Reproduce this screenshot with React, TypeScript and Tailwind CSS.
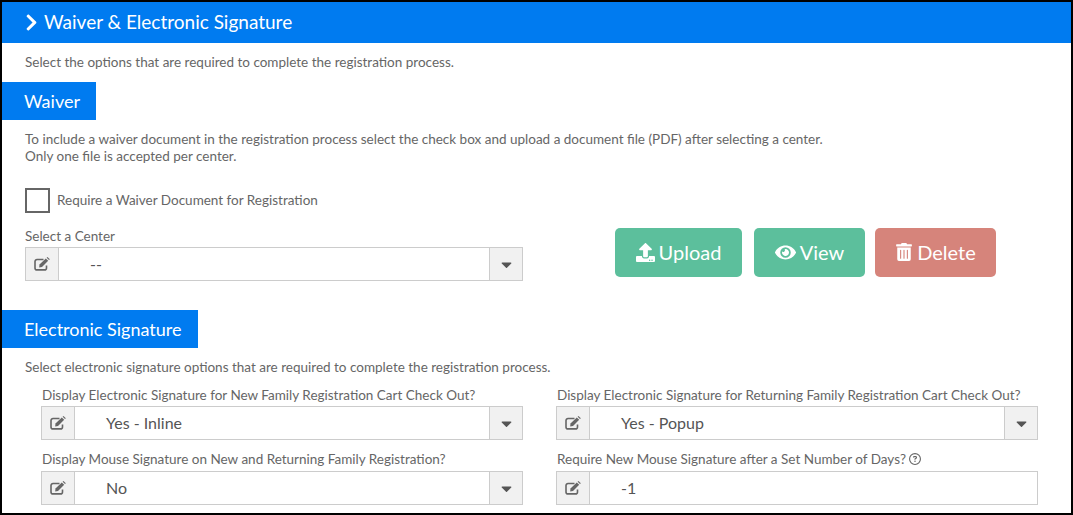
// Waiver and electronic signature section of the registration settings page.
import type { ReactNode } from "react";
import { FaCaretDown, FaChevronRight, FaEye, FaTrashAlt, FaUpload } from "react-icons/fa";
import { FaRegCircleQuestion } from "react-icons/fa6";

function EditIcon() {
  return (
    <svg viewBox="0 0 16 14" className="h-[14px] w-[16px]">
      <path d="M12.5 8.5v2.4A2 2 0 0 1 10.500 12.900H3A2 2 0 0 1 1 10.900V4.500A2 2 0 0 1 3 2.500H9.500" fill="none" stroke="currentColor" strokeWidth="1.6" />
      <path d="M5.500 7.400 11.800 1.400 14.200 3.800 8 10 5.200 10.500Z" fill="currentColor" />
      <path d="M12.600 .8 13.500 0 15.800 2.200 15 3.100Z" fill="currentColor" />
    </svg>
  );
}

function SectionTag({ children, className }: { children: ReactNode; className: string }) {
  return (
    <div className={`flex h-[38px] items-center bg-[#007bf0] pl-[22px] text-[18px] text-white ${className}`}>
      {children}
    </div>
  );
}

function Field({ value, select = true }: { value: string; select?: boolean }) {
  return (
    <div className="flex h-[34px] border border-[#cccccc] text-[#555555]">
      <div className="flex w-[33px] shrink-0 items-center justify-center border-r border-[#cccccc] bg-[#f1f1f1] text-[#666666]">
        <EditIcon />
      </div>
      <div className="flex-1 pl-[31px] text-[16px] leading-[32px]">{value}</div>
      {select && (
        <div className="flex w-[33px] shrink-0 items-center justify-center border-l border-[#cccccc] bg-[#f1f1f1] text-[17px] text-[#555555]">
          <FaCaretDown />
        </div>
      )}
    </div>
  );
}

function ActionButton({ icon, label, className }: { icon: ReactNode; label: string; className: string }) {
  return (
    <button className={`flex h-[49px] items-center justify-center gap-[4px] rounded-[5px] pb-[1px] text-[20px] text-white ${className}`}>
      {icon}
      {label}
    </button>
  );
}

export default function App() {
  return (
    <div className="h-[515px] w-[1073px] overflow-hidden border-2 border-black bg-white font-['Lato','Noto_Sans',sans-serif] text-[13.5px] text-[#666666]">
      <div className="flex h-[41px] items-center gap-[3px] bg-[#007bf0] pl-[20px] text-[19px] text-white">
        <FaChevronRight className="text-[19px]" />
        Waiver &amp; Electronic Signature
      </div>

      <p className="mt-[10px] pl-[23px] leading-[18px]">
        Select the options that are required to complete the registration process.
      </p>

      <SectionTag className="mt-[11px] w-[94px]">Waiver</SectionTag>

      <p className="mt-[11px] pl-[23px] leading-[17px]">
        To include a waiver document in the registration process select the check box and upload a document file (PDF) after selecting a center.
        <br />
        Only one file is accepted per center.
      </p>

      <div className="mt-[23px] flex items-center gap-[7px] pl-[23px]">
        <div className="size-[25px] border-2 border-[#666666]" />
        Require a Waiver Document for Registration
      </div>

      <div className="flex">
        <div className="mt-[14px] ml-[23px] w-[498px]">
          <div className="mb-[2px] leading-[18px]">Select a Center</div>
          <Field value="--" />
        </div>
        <div className="mt-[15px] ml-[92px] flex">
          <ActionButton className="w-[127px] bg-[#5cbf9c]" icon={<FaUpload className="text-[19px]" />} label="Upload" />
          <ActionButton className="ml-[12px] w-[111px] bg-[#5cbf9c]" icon={<FaEye className="text-[21px]" />} label="View" />
          <ActionButton className="ml-[10px] w-[121px] bg-[#d6847b]" icon={<FaTrashAlt className="text-[18px]" />} label="Delete" />
        </div>
      </div>

      <SectionTag className="mt-[29px] w-[196px]">Electronic Signature</SectionTag>

      <p className="mt-[10px] pl-[23px] leading-[18px]">
        Select electronic signature options that are required to complete the registration process.
      </p>

      <div className="mt-[10px] grid grid-cols-[482px_482px] gap-x-[33px] gap-y-[10px] pl-[39px]">
        <div>
          <div className="mb-[2px] pl-[1px] leading-[18px]">Display Electronic Signature for New Family Registration Cart Check Out?</div>
          <Field value="Yes - Inline" />
        </div>
        <div>
          <div className="mb-[2px] pl-[1px] leading-[18px]">Display Electronic Signature for Returning Family Registration Cart Check Out?</div>
          <Field value="Yes - Popup" />
        </div>
        <div>
          <div className="mb-[3px] pl-[1px] leading-[18px]">Display Mouse Signature on New and Returning Family Registration?</div>
          <Field value="No" />
        </div>
        <div>
          <div className="mb-[3px] flex items-center gap-[3px] pl-[1px] leading-[18px]">
            Require New Mouse Signature after a Set Number of Days?
            <FaRegCircleQuestion className="text-[12px]" />
          </div>
          <Field value="-1" select={false} />
        </div>
      </div>
    </div>
  );
}
